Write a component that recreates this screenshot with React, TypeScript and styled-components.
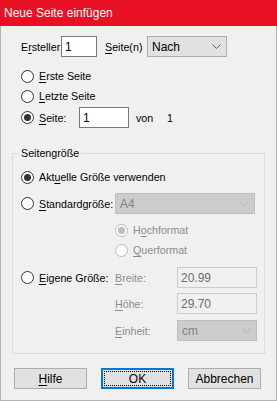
import React from "react";
import styled, { createGlobalStyle, css } from "styled-components";

const GlobalStyle = createGlobalStyle`
  html, body { margin: 0; padding: 0; background: #f0f0f0; }
  body {
    font-family: "Liberation Sans", Arial, sans-serif;
    font-size: 10.7px;
    color: #000;
  }
  * { box-sizing: border-box; }
`;

const Window = styled.div`
  width: 277px;
  height: 401px;
  display: flex;
  flex-direction: column;
  background: #f0f0f0;
`;

const TitleBar = styled.div`
  height: 26px;
  flex: none;
  background: #e81123;
  color: #fff;
  font-size: 12px;
  display: flex;
  align-items: center;
  padding-left: 4px;
`;

const Body = styled.div`
  flex: 1;
  border: 1px solid #b4b4b4;
  border-top: none;
  display: flex;
  flex-direction: column;
  padding: 10px 11px 0 11px;
`;

const TopSection = styled.div`
  padding-left: 9px;
  display: flex;
  flex-direction: column;
`;

const Row = styled.div<{ $mt?: number; $h?: number }>`
  display: flex;
  align-items: center;
  height: ${(p) => p.$h ?? 21}px;
  margin-top: ${(p) => p.$mt ?? 0}px;
`;

const Label = styled.span<{ $w?: number; $disabled?: boolean; $ml?: number }>`
  display: inline-block;
  white-space: nowrap;
  ${(p) => p.$w !== undefined && css`width: ${p.$w}px;`}
  margin-left: ${(p) => p.$ml ?? 0}px;
  color: ${(p) => (p.$disabled ? "#8c8c8c" : "#000")};
`;

const Key = styled.span`
  text-decoration: underline;
  text-underline-offset: 2px;
`;

const TextBox = styled.div<{ $w: number; $disabled?: boolean; $ml?: number }>`
  width: ${(p) => p.$w}px;
  height: 21px;
  margin-left: ${(p) => p.$ml ?? 0}px;
  border: 1px solid ${(p) => (p.$disabled ? "#cccccc" : "#7a7a7a")};
  background: ${(p) => (p.$disabled ? "#f0f0f0" : "#ffffff")};
  color: ${(p) => (p.$disabled ? "#6d6d6d" : "#000")};
  font-size: 12px;
  display: flex;
  align-items: center;
  padding-left: 3px;
`;

const SelectBox = styled.div<{ $w: number; $disabled?: boolean; $ml?: number }>`
  width: ${(p) => p.$w}px;
  height: 21px;
  margin-left: ${(p) => p.$ml ?? 0}px;
  border: 1px solid ${(p) => (p.$disabled ? "#bfbfbf" : "#adadad")};
  background: ${(p) => (p.$disabled ? "#cccccc" : "#e1e1e1")};
  color: ${(p) => (p.$disabled ? "#838383" : "#000")};
  font-size: 12px;
  display: flex;
  align-items: center;
  justify-content: space-between;
  padding: 0 5px 0 4px;
`;

const Chevron = ({ disabled }: { disabled?: boolean }) => (
  <svg width="9" height="5" viewBox="0 0 9 5">
    <polyline
      points="0.5,0.5 4.5,4.5 8.5,0.5"
      fill="none"
      stroke={disabled ? "#b5b5b5" : "#606060"}
      strokeWidth="1"
    />
  </svg>
);

const Circle = styled.span<{ $checked?: boolean; $disabled?: boolean }>`
  flex: none;
  width: 13px;
  height: 13px;
  border-radius: 50%;
  border: 1px solid ${(p) => (p.$disabled ? "#bcbcbc" : "#333333")};
  background: ${(p) => (p.$disabled ? "#fcfcfc" : "#ffffff")};
  display: flex;
  align-items: center;
  justify-content: center;
  &::after {
    content: "";
    display: ${(p) => (p.$checked ? "block" : "none")};
    width: 7px;
    height: 7px;
    border-radius: 50%;
    background: ${(p) => (p.$disabled ? "#bcbcbc" : "#333333")};
  }
`;

const RadioWrap = styled.div<{ $col?: string }>`
  display: flex;
  align-items: center;
  gap: 5px;
  ${(p) => p.$col && css`grid-column: ${p.$col};`}
`;

type RadioProps = {
  checked?: boolean;
  disabled?: boolean;
  col?: string;
  labelWidth?: number;
  children: React.ReactNode;
};

const Radio = ({ checked, disabled, col, labelWidth, children }: RadioProps) => (
  <RadioWrap $col={col}>
    <Circle $checked={checked} $disabled={disabled} />
    <Label $disabled={disabled} $w={labelWidth}>
      {children}
    </Label>
  </RadioWrap>
);

const Group = styled.fieldset`
  margin: 19px 0 0 0;
  border: 1px solid #dcdcdc;
  padding: 0 0 12px 8px;
  min-width: 0;
  display: flex;
  flex-direction: column;
`;

const Legend = styled.legend`
  padding: 0 2px;
  margin-left: -2px;
  line-height: 13px;
`;

const Line = styled.div<{ $mt?: number; $h?: number }>`
  display: grid;
  grid-template-columns: 94px 62px 80px;
  align-items: center;
  height: ${(p) => p.$h ?? 21}px;
  margin-top: ${(p) => p.$mt ?? 0}px;
`;

const Cell = styled.div<{ $col?: string }>`
  ${(p) => p.$col && css`grid-column: ${p.$col};`}
  display: flex;
  align-items: center;
`;

const ButtonRow = styled.div`
  display: flex;
  gap: 14px;
  padding-left: 2px;
  margin-top: 14px;
`;

const Button = styled.div<{ $default?: boolean }>`
  width: 73px;
  height: 21px;
  display: flex;
  align-items: center;
  justify-content: center;
  background: #e1e1e1;
  font-size: 12px;
  position: relative;
  border: ${(p) => (p.$default ? "2px solid #0078d7" : "1px solid #adadad")};
  ${(p) =>
    p.$default &&
    css`
      &::after {
        content: "";
        position: absolute;
        inset: 1px;
        border: 1px dotted #000;
      }
    `}
`;

export default function App() {
  return (
    <>
      <GlobalStyle />
      <Window>
        <TitleBar>Neue Seite einfügen</TitleBar>
        <Body>
          <TopSection>
            <Row>
              <Label $w={40}>
                E<Key>r</Key>steller
              </Label>
              <TextBox $w={36}>1</TextBox>
              <Label $w={42} $ml={8}>
                <Key>S</Key>eite(n)
              </Label>
              <SelectBox $w={80}>
                <span>Nach</span>
                <Chevron />
              </SelectBox>
            </Row>
            <Row $mt={9} $h={20}>
              <Radio>
                <Key>E</Key>rste Seite
              </Radio>
            </Row>
            <Row $h={20}>
              <Radio>
                <Key>L</Key>etzte Seite
              </Radio>
            </Row>
            <Row $mt={1}>
              <Radio checked labelWidth={40}>
                <Key>S</Key>eite:
              </Radio>
              <TextBox $w={50}>1</TextBox>
              <Label $ml={7} $w={31}>von</Label>
              <Label>1</Label>
            </Row>
          </TopSection>

          <Group>
            <Legend>Seitengröße</Legend>
            <Line $h={20} $mt={7}>
              <Cell $col="1 / span 3">
                <Radio checked>
                  Akt<Key>u</Key>elle Größe verwenden
                </Radio>
              </Cell>
            </Line>
            <Line $mt={6}>
              <Cell>
                <Radio>
                  <Key>S</Key>tandardgröße:
                </Radio>
              </Cell>
              <Cell $col="2 / span 2">
                <SelectBox $w={140} $disabled>
                  <span>A4</span>
                  <Chevron disabled />
                </SelectBox>
              </Cell>
            </Line>
            <Line $h={20} $mt={6}>
              <Cell $col="2 / span 2">
                <Radio checked disabled>
                  H<Key>o</Key>chformat
                </Radio>
              </Cell>
            </Line>
            <Line $h={20}>
              <Cell $col="2 / span 2">
                <Radio disabled>
                  <Key>Q</Key>uerformat
                </Radio>
              </Cell>
            </Line>
            <Line $mt={7}>
              <Cell>
                <Radio>
                  <Key>E</Key>igene Größe:
                </Radio>
              </Cell>
              <Cell>
                <Label $disabled>
                  <Key>B</Key>reite:
                </Label>
              </Cell>
              <Cell>
                <TextBox $w={80} $disabled>20.99</TextBox>
              </Cell>
            </Line>
            <Line $mt={5}>
              <Cell $col="2">
                <Label $disabled>
                  <Key>H</Key>öhe:
                </Label>
              </Cell>
              <Cell>
                <TextBox $w={80} $disabled>29.70</TextBox>
              </Cell>
            </Line>
            <Line $mt={6}>
              <Cell $col="2">
                <Label $disabled>
                  <Key>E</Key>inheit:
                </Label>
              </Cell>
              <Cell>
                <SelectBox $w={80} $disabled>
                  <span>cm</span>
                  <Chevron disabled />
                </SelectBox>
              </Cell>
            </Line>
          </Group>

          <ButtonRow>
            <Button>
              <Key>H</Key>ilfe
            </Button>
            <Button $default>OK</Button>
            <Button>Abbrechen</Button>
          </ButtonRow>
        </Body>
      </Window>
    </>
  );
}
